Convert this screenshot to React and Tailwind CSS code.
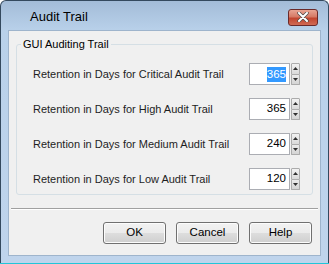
const rows = [
  { label: 'Retention in Days for Critical Audit Trail', value: '365', selected: true },
  { label: 'Retention in Days for High Audit Trail', value: '365' },
  { label: 'Retention in Days for Medium Audit Trail', value: '240' },
  { label: 'Retention in Days for Low Audit Trail', value: '120' },
];

function Spin() {
  return (
    <div className="flex flex-col w-[9px] h-[22px] ml-px">
      <div className="flex-1 flex items-center justify-center border border-[#acacac] bg-gradient-to-b from-[#f2f2f2] to-[#d9d9d9] rounded-t-[1px]">
        <svg width="5" height="3" viewBox="0 0 5 3"><path d="M2.5 0 L5 3 L0 3 Z" fill="#303030" /></svg>
      </div>
      <div className="flex-1 flex items-center justify-center border border-t-0 border-[#acacac] bg-gradient-to-b from-[#ebebeb] to-[#d4d4d4] rounded-b-[1px]">
        <svg width="5" height="3" viewBox="0 0 5 3"><path d="M0 0 L5 0 L2.5 3 Z" fill="#303030" /></svg>
      </div>
    </div>
  );
}

function Btn({ children }) {
  return (
    <button className="w-[63px] h-[22px] rounded-[3px] border border-[#707070] bg-[linear-gradient(#f2f2f2_0%,#ebebeb_50%,#dddddd_51%,#cfcfcf_100%)] text-[11.5px] text-black shadow-[inset_0_0_0_1px_#fcfcfc]">
      {children}
    </button>
  );
}

export default function App() {
  return (
    <div className="w-[329px] h-[264px] bg-white font-['Liberation_Sans',Arial,sans-serif]">
      <div className="w-[329px] h-[263px] rounded-t-[6px] border border-[#34495e] border-b-0 bg-[linear-gradient(#a3bcd8_0px,#b9d1ea_30px,#bfd4ec_100%)] flex flex-col">
        <div className="h-[29px] flex items-center justify-between pl-[29px] pr-[10px]">
          <span className="text-[13px] text-black mt-[2px]">Audit Trail</span>
          <div className="w-[30px] h-[17px] mt-[3px] rounded-[3px] border border-[#6a2a2a] bg-[linear-gradient(#e8a493_0%,#d67a66_45%,#c2452f_55%,#d06a54_100%)] flex items-center justify-center">
            <svg width="12" height="10" viewBox="0 0 12 10">
              <path d="M2 1 L10 9 M10 1 L2 9" stroke="#4a4a4a" strokeWidth="3.4" strokeLinecap="round" />
              <path d="M2 1 L10 9 M10 1 L2 9" stroke="#ffffff" strokeWidth="2" strokeLinecap="round" />
            </svg>
          </div>
        </div>
        <div className="mx-[7px] h-[226px] bg-[#f0f0f0] border border-[#9eb4cc] flex flex-col">
          <fieldset className="mx-[7px] mt-[6px] h-[158px] border border-[#d5dfe5] rounded-[3px] pl-[16px] pr-[12px] pt-[12px]">
            <legend className="ml-[-12px] px-[2px] text-[11px] text-black leading-[14px]">GUI Auditing Trail</legend>
            <div className="flex flex-col gap-[13px]">
              {rows.map((r) => (
                <div key={r.label} className="flex items-center justify-between">
                  <span className="text-[11px] text-[#1e1e1e]">{r.label}</span>
                  <div className="flex items-center">
                    <div className="w-[41px] h-[22px] border border-[#abadb3] bg-white flex items-center justify-end pr-[3px] text-[11.5px]">
                      <span className={r.selected ? 'bg-[#3399ff] text-white leading-[15px]' : 'text-black'}>{r.value}</span>
                    </div>
                    <Spin />
                  </div>
                </div>
              ))}
            </div>
          </fieldset>
          <div className="mx-[2px] mt-[13px] h-[2px] border-t border-[#a0a0a0] border-b border-b-white" />
          <div className="flex justify-end gap-[10px] pr-[8px] mt-[12px]">
            <Btn>OK</Btn>
            <Btn>Cancel</Btn>
            <Btn>Help</Btn>
          </div>
        </div>
      </div>
      <div className="h-px bg-[#21c6d9]" />
    </div>
  );
}
